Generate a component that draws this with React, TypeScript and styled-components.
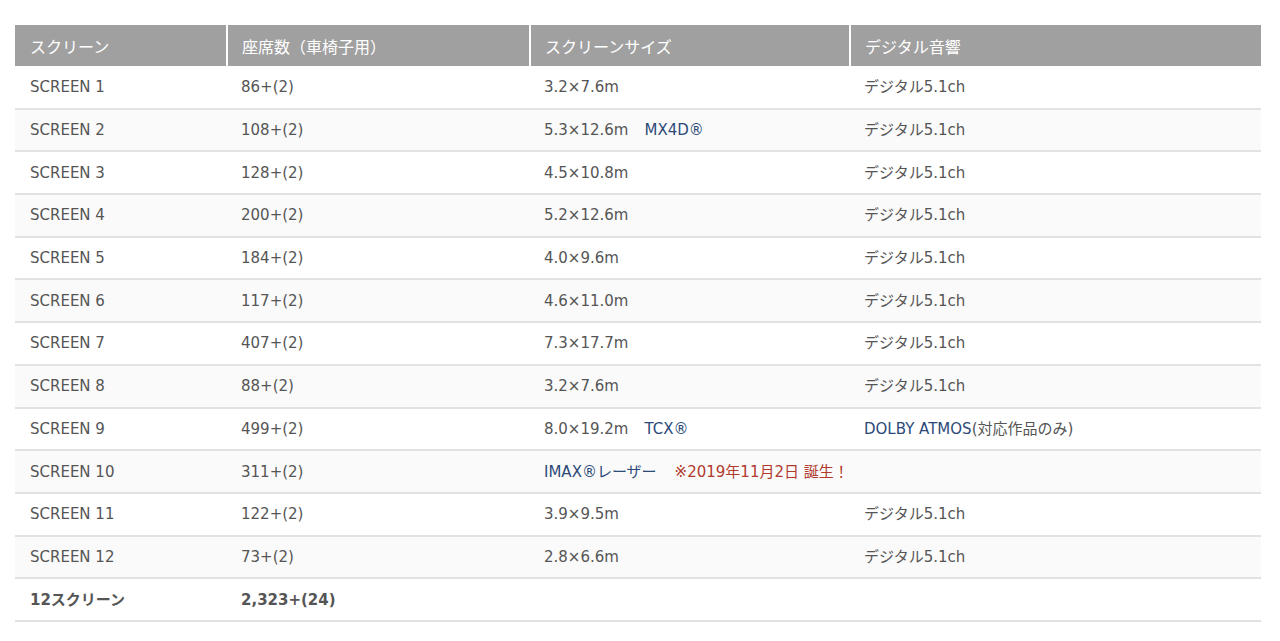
import React from 'react';
import styled, { createGlobalStyle } from 'styled-components';

const GlobalStyle = createGlobalStyle`
  html, body {
    margin: 0;
    padding: 0;
    background: #ffffff;
  }
  body {
    font-family: 'DejaVu Sans', Verdana, 'Noto Sans CJK JP', sans-serif;
    color: #555555;
  }
`;

const Page = styled.div`
  padding: 25px 19px 20px 15px;
`;

const Table = styled.table`
  width: 100%;
  border-collapse: collapse;
  table-layout: fixed;
  font-size: 15px;
`;

const Th = styled.th`
  background: #a0a0a0;
  color: #ffffff;
  font-size: 16px;
  font-weight: normal;
  text-align: left;
  height: 41px;
  padding: 0 14px;
  box-sizing: border-box;
  border-left: 2px solid #ffffff;
  &:first-child {
    border-left: none;
    padding-left: 15px;
  }
`;

const Tr = styled.tr<{ $alt: boolean }>`
  background: ${({ $alt }) => ($alt ? '#fafafa' : '#ffffff')};
  border-bottom: 2px solid #e2e2e2;
`;

const Td = styled.td<{ $bold?: boolean }>`
  height: 42.7px;
  padding: 0 14px 0 15px;
  box-sizing: border-box;
  vertical-align: middle;
  line-height: 20px;
  font-weight: ${({ $bold }) => ($bold ? 'bold' : 'normal')};
  white-space: nowrap;
  & + & {
    padding-left: 14px;
  }
`;

const Blue = styled.span`
  color: #2c4a78;
`;

const Red = styled.span`
  color: #b13a2e;
`;

const Spacer = styled.span<{ $w?: number }>`
  display: inline-block;
  width: ${({ $w }) => $w ?? 16}px;
`;

type Row = {
  name: string;
  seats: string;
  size: React.ReactNode;
  sound: React.ReactNode;
};

const rows: Row[] = [
  { name: 'SCREEN 1', seats: '86+(2)', size: '3.2×7.6m', sound: 'デジタル5.1ch' },
  {
    name: 'SCREEN 2',
    seats: '108+(2)',
    size: (
      <>
        5.3×12.6m<Spacer />
        <Blue>MX4D®</Blue>
      </>
    ),
    sound: 'デジタル5.1ch',
  },
  { name: 'SCREEN 3', seats: '128+(2)', size: '4.5×10.8m', sound: 'デジタル5.1ch' },
  { name: 'SCREEN 4', seats: '200+(2)', size: '5.2×12.6m', sound: 'デジタル5.1ch' },
  { name: 'SCREEN 5', seats: '184+(2)', size: '4.0×9.6m', sound: 'デジタル5.1ch' },
  { name: 'SCREEN 6', seats: '117+(2)', size: '4.6×11.0m', sound: 'デジタル5.1ch' },
  { name: 'SCREEN 7', seats: '407+(2)', size: '7.3×17.7m', sound: 'デジタル5.1ch' },
  { name: 'SCREEN 8', seats: '88+(2)', size: '3.2×7.6m', sound: 'デジタル5.1ch' },
  {
    name: 'SCREEN 9',
    seats: '499+(2)',
    size: (
      <>
        8.0×19.2m<Spacer />
        <Blue>TCX®</Blue>
      </>
    ),
    sound: (
      <>
        <Blue>DOLBY ATMOS</Blue>(対応作品のみ)
      </>
    ),
  },
  {
    name: 'SCREEN 10',
    seats: '311+(2)',
    size: (
      <>
        <Blue>IMAX®レーザー</Blue>
        <Spacer $w={18} />
        <Red>※2019年11月2日 誕生！</Red>
      </>
    ),
    sound: '',
  },
  { name: 'SCREEN 11', seats: '122+(2)', size: '3.9×9.5m', sound: 'デジタル5.1ch' },
  { name: 'SCREEN 12', seats: '73+(2)', size: '2.8×6.6m', sound: 'デジタル5.1ch' },
];

const App = () => {
  return (
    <>
      <GlobalStyle />
      <Page>
        <Table>
          <colgroup>
            <col style={{ width: 212 }} />
            <col style={{ width: 303 }} />
            <col style={{ width: 320 }} />
            <col />
          </colgroup>
          <thead>
            <tr>
              <Th>スクリーン</Th>
              <Th>座席数（車椅子用）</Th>
              <Th>スクリーンサイズ</Th>
              <Th>デジタル音響</Th>
            </tr>
          </thead>
          <tbody>
            {rows.map((r, i) => (
              <Tr key={r.name} $alt={i % 2 === 1}>
                <Td>{r.name}</Td>
                <Td>{r.seats}</Td>
                <Td>{r.size}</Td>
                <Td>{r.sound}</Td>
              </Tr>
            ))}
            <Tr $alt={false}>
              <Td $bold>12スクリーン</Td>
              <Td $bold>2,323+(24)</Td>
              <Td />
              <Td />
            </Tr>
          </tbody>
        </Table>
      </Page>
    </>
  );
};

export default App;
